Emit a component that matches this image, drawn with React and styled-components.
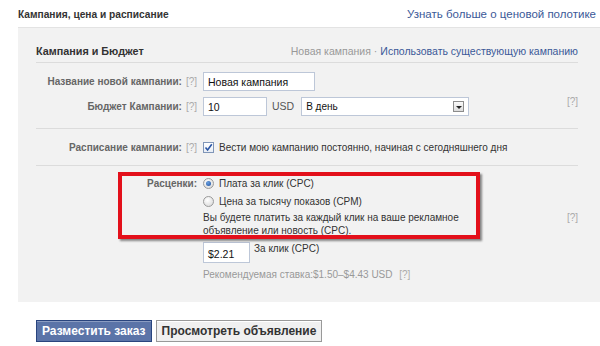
import React from 'react';
import styled, { createGlobalStyle } from 'styled-components';

const GlobalStyle = createGlobalStyle`
  html, body {
    margin: 0;
    padding: 0;
    background: #fff;
  }
  body {
    font-family: "Liberation Sans", Arial, sans-serif;
    font-size: 10px;
    line-height: 13px;
    color: #333;
  }
`;

const Page = styled.div`
  width: 600px;
  height: 346px;
  overflow: hidden;
  padding-left: 18px;
  box-sizing: border-box;
`;

const TopBar = styled.div`
  display: flex;
  justify-content: space-between;
  align-items: center;
  height: 27px;
  padding-right: 4px;
  padding-top: 2px;
  box-sizing: border-box;
`;

const Title = styled.h2`
  margin: 0;
  font-size: 10.2px;
  font-weight: bold;
  color: #333;
`;

const Link = styled.a`
  color: #3b5998;
  text-decoration: none;
  font-size: ${(p) => p.$size || 'inherit'};
  cursor: pointer;
`;

const Panel = styled.div`
  background: #f2f2f2;
  border-top: 1px solid #e3e3e3;
  height: 275px;
  padding: 0 22px 0 18px;
  box-sizing: border-box;
`;

const SectionHead = styled.div`
  display: flex;
  justify-content: space-between;
  align-items: center;
  height: 35px;
  padding-top: 13px;
  box-sizing: border-box;
  border-bottom: 1px solid #dcdcdc;
`;

const SectionTitle = styled.div`
  font-weight: bold;
  font-size: 10.8px;
  color: #333;
`;

const Switch = styled.div`
  color: #999;
  font-size: 10.5px;
  display: flex;
  gap: 3px;
`;

const Section = styled.div`
  position: relative;
  padding: ${(p) => p.$pad || '9px 0'};
  border-bottom: ${(p) => (p.$last ? 'none' : '1px solid #dcdcdc')};
  display: flex;
  flex-direction: column;
  gap: ${(p) => p.$gap || '6px'};
`;

const Row = styled.div`
  display: grid;
  grid-template-columns: 161px 1fr 20px;
  column-gap: 6px;
  align-items: ${(p) => p.$align || 'center'};
  margin-top: ${(p) => p.$mt || '0'};
`;

const Label = styled.div`
  text-align: right;
  font-weight: bold;
  color: #666;
  white-space: nowrap;
`;

const Help = styled.span`
  color: #aaa;
  font-weight: normal;
  margin-left: 4px;
`;

const RightHelp = styled.span`
  color: #aaa;
  text-align: right;
  align-self: ${(p) => p.$self || 'center'};
  margin-top: ${(p) => p.$mt || '0'};
`;

const Field = styled.div`
  display: flex;
  align-items: ${(p) => p.$align || 'center'};
  gap: ${(p) => p.$gap || '4px'};
  color: #333;
`;

const Input = styled.div`
  width: ${(p) => p.$w}px;
  height: ${(p) => p.$hgt || 19}px;
  border: 1px solid #bdc7d8;
  background: #fff;
  box-sizing: border-box;
  padding: ${(p) => (p.$hgt ? '5px 4px 0' : '3px 4px 0')};
  color: #111;
  font-size: 10.5px;
`;

const Currency = styled.span`
  color: #555;
  font-size: 10.5px;
  margin: 0 3px 0 1px;
`;

const Select = styled.div`
  width: 168px;
  height: 19px;
  border: 1px solid #bdc7d8;
  background: #fff;
  box-sizing: border-box;
  display: flex;
  align-items: center;
  justify-content: space-between;
  padding: 0 4px 0 4px;
  color: #111;
`;

const SelectArrow = styled.span`
  width: 11px;
  height: 11px;
  border: 1px solid #8c8c8c;
  background: linear-gradient(#fafafa, #dcdcdc);
  box-sizing: border-box;
  display: flex;
  align-items: center;
  justify-content: center;
  &::after {
    content: '';
    border-left: 3px solid transparent;
    border-right: 3px solid transparent;
    border-top: 3px solid #222;
    margin-top: 1px;
  }
`;

const Checkbox = styled.span`
  width: 11px;
  height: 11px;
  border: 1px solid #8096b8;
  background: linear-gradient(#fff, #e8edf5);
  box-sizing: border-box;
  display: inline-flex;
  align-items: center;
  justify-content: center;
  flex: none;
`;

const Radio = styled.span`
  width: 11px;
  height: 11px;
  border-radius: 50%;
  border: 1px solid #9a9a9a;
  background: radial-gradient(circle at 40% 35%, #fff, #d4d4d4);
  box-sizing: border-box;
  display: inline-flex;
  align-items: center;
  justify-content: center;
  flex: none;
  &::after {
    content: '';
    display: ${(p) => (p.$checked ? 'block' : 'none')};
    width: 5px;
    height: 5px;
    border-radius: 50%;
    background: radial-gradient(circle at 40% 35%, #6aa0e0, #1d4f9c);
  }
`;

const Note = styled.div`
  color: #333;
  line-height: 13px;
`;

const Muted = styled.div`
  color: #999;
`;

const Highlight = styled.div`
  position: absolute;
  left: 82px;
  top: 6px;
  width: 362px;
  height: 67px;
  border: 4px solid #e3101b;
  box-sizing: border-box;
  box-shadow: 2px 2px 2px rgba(0, 0, 0, 0.45);
  pointer-events: none;
`;

const Actions = styled.div`
  display: flex;
  gap: 4px;
  padding: 18px 0 0 18px;
`;

const Button = styled.button`
  height: 22px;
  padding: 0 5px;
  font-family: inherit;
  font-size: 12px;
  font-weight: bold;
  border: 1px solid ${(p) => (p.$primary ? '#29447e' : '#999')};
  background: ${(p) => (p.$primary ? '#5b74a8' : '#f0f0f0')};
  color: ${(p) => (p.$primary ? '#fff' : '#333')};
  box-shadow: inset 0 1px 0 ${(p) => (p.$primary ? '#8a9cc2' : '#fff')};
  cursor: pointer;
`;

function CheckMark() {
  return (
    <svg width="9" height="9" viewBox="0 0 9 9">
      <path d="M1.5 4.5 L3.6 7 L7.8 1.2" fill="none" stroke="#2a55a5" strokeWidth="1.6" />
    </svg>
  );
}

export default function App() {
  return (
    <Page>
      <GlobalStyle />
      <TopBar>
        <Title>Кампания, цена и расписание</Title>
        <Link $size="11.5px">Узнать больше о ценовой полотике</Link>
      </TopBar>
      <Panel>
        <SectionHead>
          <SectionTitle>Кампания и Бюджет</SectionTitle>
          <Switch>
            <span>Новая кампания</span>
            <span>·</span>
            <Link>Использовать существующую кампанию</Link>
          </Switch>
        </SectionHead>

        <Section $pad="9px 0 12px" $gap="6px">
          <Row>
            <Label>Название новой кампании:<Help>[?]</Help></Label>
            <Field>
              <Input $w={112}>Новая кампания</Input>
            </Field>
            <span />
          </Row>
          <Row>
            <Label>Бюджет Кампании:<Help>[?]</Help></Label>
            <Field>
              <Input $w={64}>10</Input>
              <Currency>USD</Currency>
              <Select>
                <span>В день</span>
                <SelectArrow />
              </Select>
            </Field>
            <RightHelp $self="start" $mt="-2px">[?]</RightHelp>
          </Row>
        </Section>

        <Section $pad="12px 0 11px">
          <Row>
            <Label>Расписание кампании:<Help>[?]</Help></Label>
            <Field $gap="5px">
              <Checkbox><CheckMark /></Checkbox>
              <span>Вести мою кампанию постоянно, начиная с сегодняшнего дня</span>
            </Field>
            <span />
          </Row>
        </Section>

        <Section $pad="11px 0 0" $gap="5px" $last>
          <Row>
            <Label>Расценки:</Label>
            <Field $gap="5px">
              <Radio $checked />
              <span>Плата за клик (CPC)</span>
            </Field>
            <span />
          </Row>
          <Row>
            <span />
            <Field $gap="5px">
              <Radio />
              <span>Цена за тысячу показов (CPM)</span>
            </Field>
            <span />
          </Row>
          <Row $mt="-2px">
            <span />
            <Note>
              Вы будете платить за каждый клик на ваше рекламное
              <br />
              объявление или новость (CPC).
            </Note>
            <RightHelp $self="start">[?]</RightHelp>
          </Row>
          <Row $align="start">
            <span />
            <Field $align="flex-start" $gap="4px">
              <Input $w={47} $hgt={21}>$2.21</Input>
              <span>За клик (CPC)</span>
            </Field>
            <span />
          </Row>
          <Row>
            <span />
            <Muted>Рекомендуемая ставка:$1.50–$4.43 USD <Help>[?]</Help></Muted>
            <span />
          </Row>
          <Highlight />
        </Section>
      </Panel>
      <Actions>
        <Button $primary>Разместить заказ</Button>
        <Button>Просмотреть объявление</Button>
      </Actions>
    </Page>
  );
}
